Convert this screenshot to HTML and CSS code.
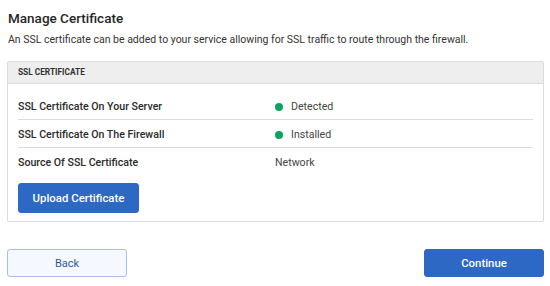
FILE: index.html
```html
<!DOCTYPE html>
<html>
<head>
<meta charset="utf-8">
<link rel="stylesheet" href="styles.css">
</head>
<body>
<div class="page">
  <h1 class="title">Manage Certificate</h1>
  <p class="desc">An SSL certificate can be added to your service allowing for SSL traffic to route through the firewall.</p>
  <section class="card">
    <div class="card-head">SSL CERTIFICATE</div>
    <div class="card-body">
      <div class="row">
        <div class="label">SSL Certificate On Your Server</div>
        <div class="value"><span class="dot"></span>Detected</div>
      </div>
      <div class="row">
        <div class="label">SSL Certificate On The Firewall</div>
        <div class="value"><span class="dot"></span>Installed</div>
      </div>
      <div class="row last">
        <div class="label">Source Of SSL Certificate</div>
        <div class="value">Network</div>
      </div>
      <button class="btn btn-primary upload">Upload Certificate</button>
    </div>
  </section>
  <div class="actions">
    <button class="btn btn-secondary">Back</button>
    <button class="btn btn-primary">Continue</button>
  </div>
</div>
</body>
</html>
```
FILE: styles.css
```css
* { box-sizing: border-box; }
html, body { margin: 0; padding: 0; background: #fff; }
body {
  font-family: "Roboto", "Liberation Sans", sans-serif;
  color: #333;
}
.page {
  padding: 8px 6px 0 7px;
  width: 550px;
}
.title {
  margin: 0;
  padding-left: 1px;
  font-size: 13.5px;
  font-weight: 500;
  line-height: 20px;
  color: #262626;
}
.desc {
  margin: 4px 0 0;
  padding-left: 1px;
  font-size: 10.5px;
  line-height: 16px;
  color: #333;
  white-space: nowrap;
}
.card {
  margin-top: 13px;
  border: 1px solid #dcdcdc;
  border-radius: 2px;
}
.card-head {
  height: 22px;
  background: #eeeeee;
  border-bottom: 1px solid #dcdcdc;
  padding-left: 10px;
  font-size: 8.3px;
  font-weight: 700;
  line-height: 21px;
  color: #333;
}
.card-body {
  padding: 8px 10px 8px 10px;
}
.row {
  display: grid;
  grid-template-columns: 257px 1fr;
  height: 28px;
  padding-top: 2px;
  align-items: center;
  border-bottom: 1px solid #dcdcdc;
  font-size: 10.6px;
  line-height: 14px;
}
.row.last { border-bottom: none; height: 27px; }
.label { font-weight: 500; color: #2a2a2a; }
.value {
  display: flex;
  align-items: center;
  color: #444;
}
.dot {
  width: 8px;
  height: 8px;
  border-radius: 50%;
  background: #0aa45f;
  margin-right: 8px;
}
.btn {
  font-family: inherit;
  font-size: 11.4px;
  font-weight: 500;
  border-radius: 3px;
  cursor: pointer;
  padding: 0;
}
.btn-primary {
  background: #2d68c4;
  border: 1px solid #2d68c4;
  color: #fff;
}
.upload {
  margin-top: 8px;
  width: 121px;
  height: 30px;
  display: block;
}
.actions {
  margin-top: 27px;
  display: flex;
  justify-content: space-between;
}
.actions .btn {
  width: 120px;
  height: 28px;
}
.btn-secondary {
  background: #f5f8fe;
  border: 1px solid #a6c0ea;
  color: #2d5aa8;
  font-weight: 400;
  font-size: 11px;
}
```
